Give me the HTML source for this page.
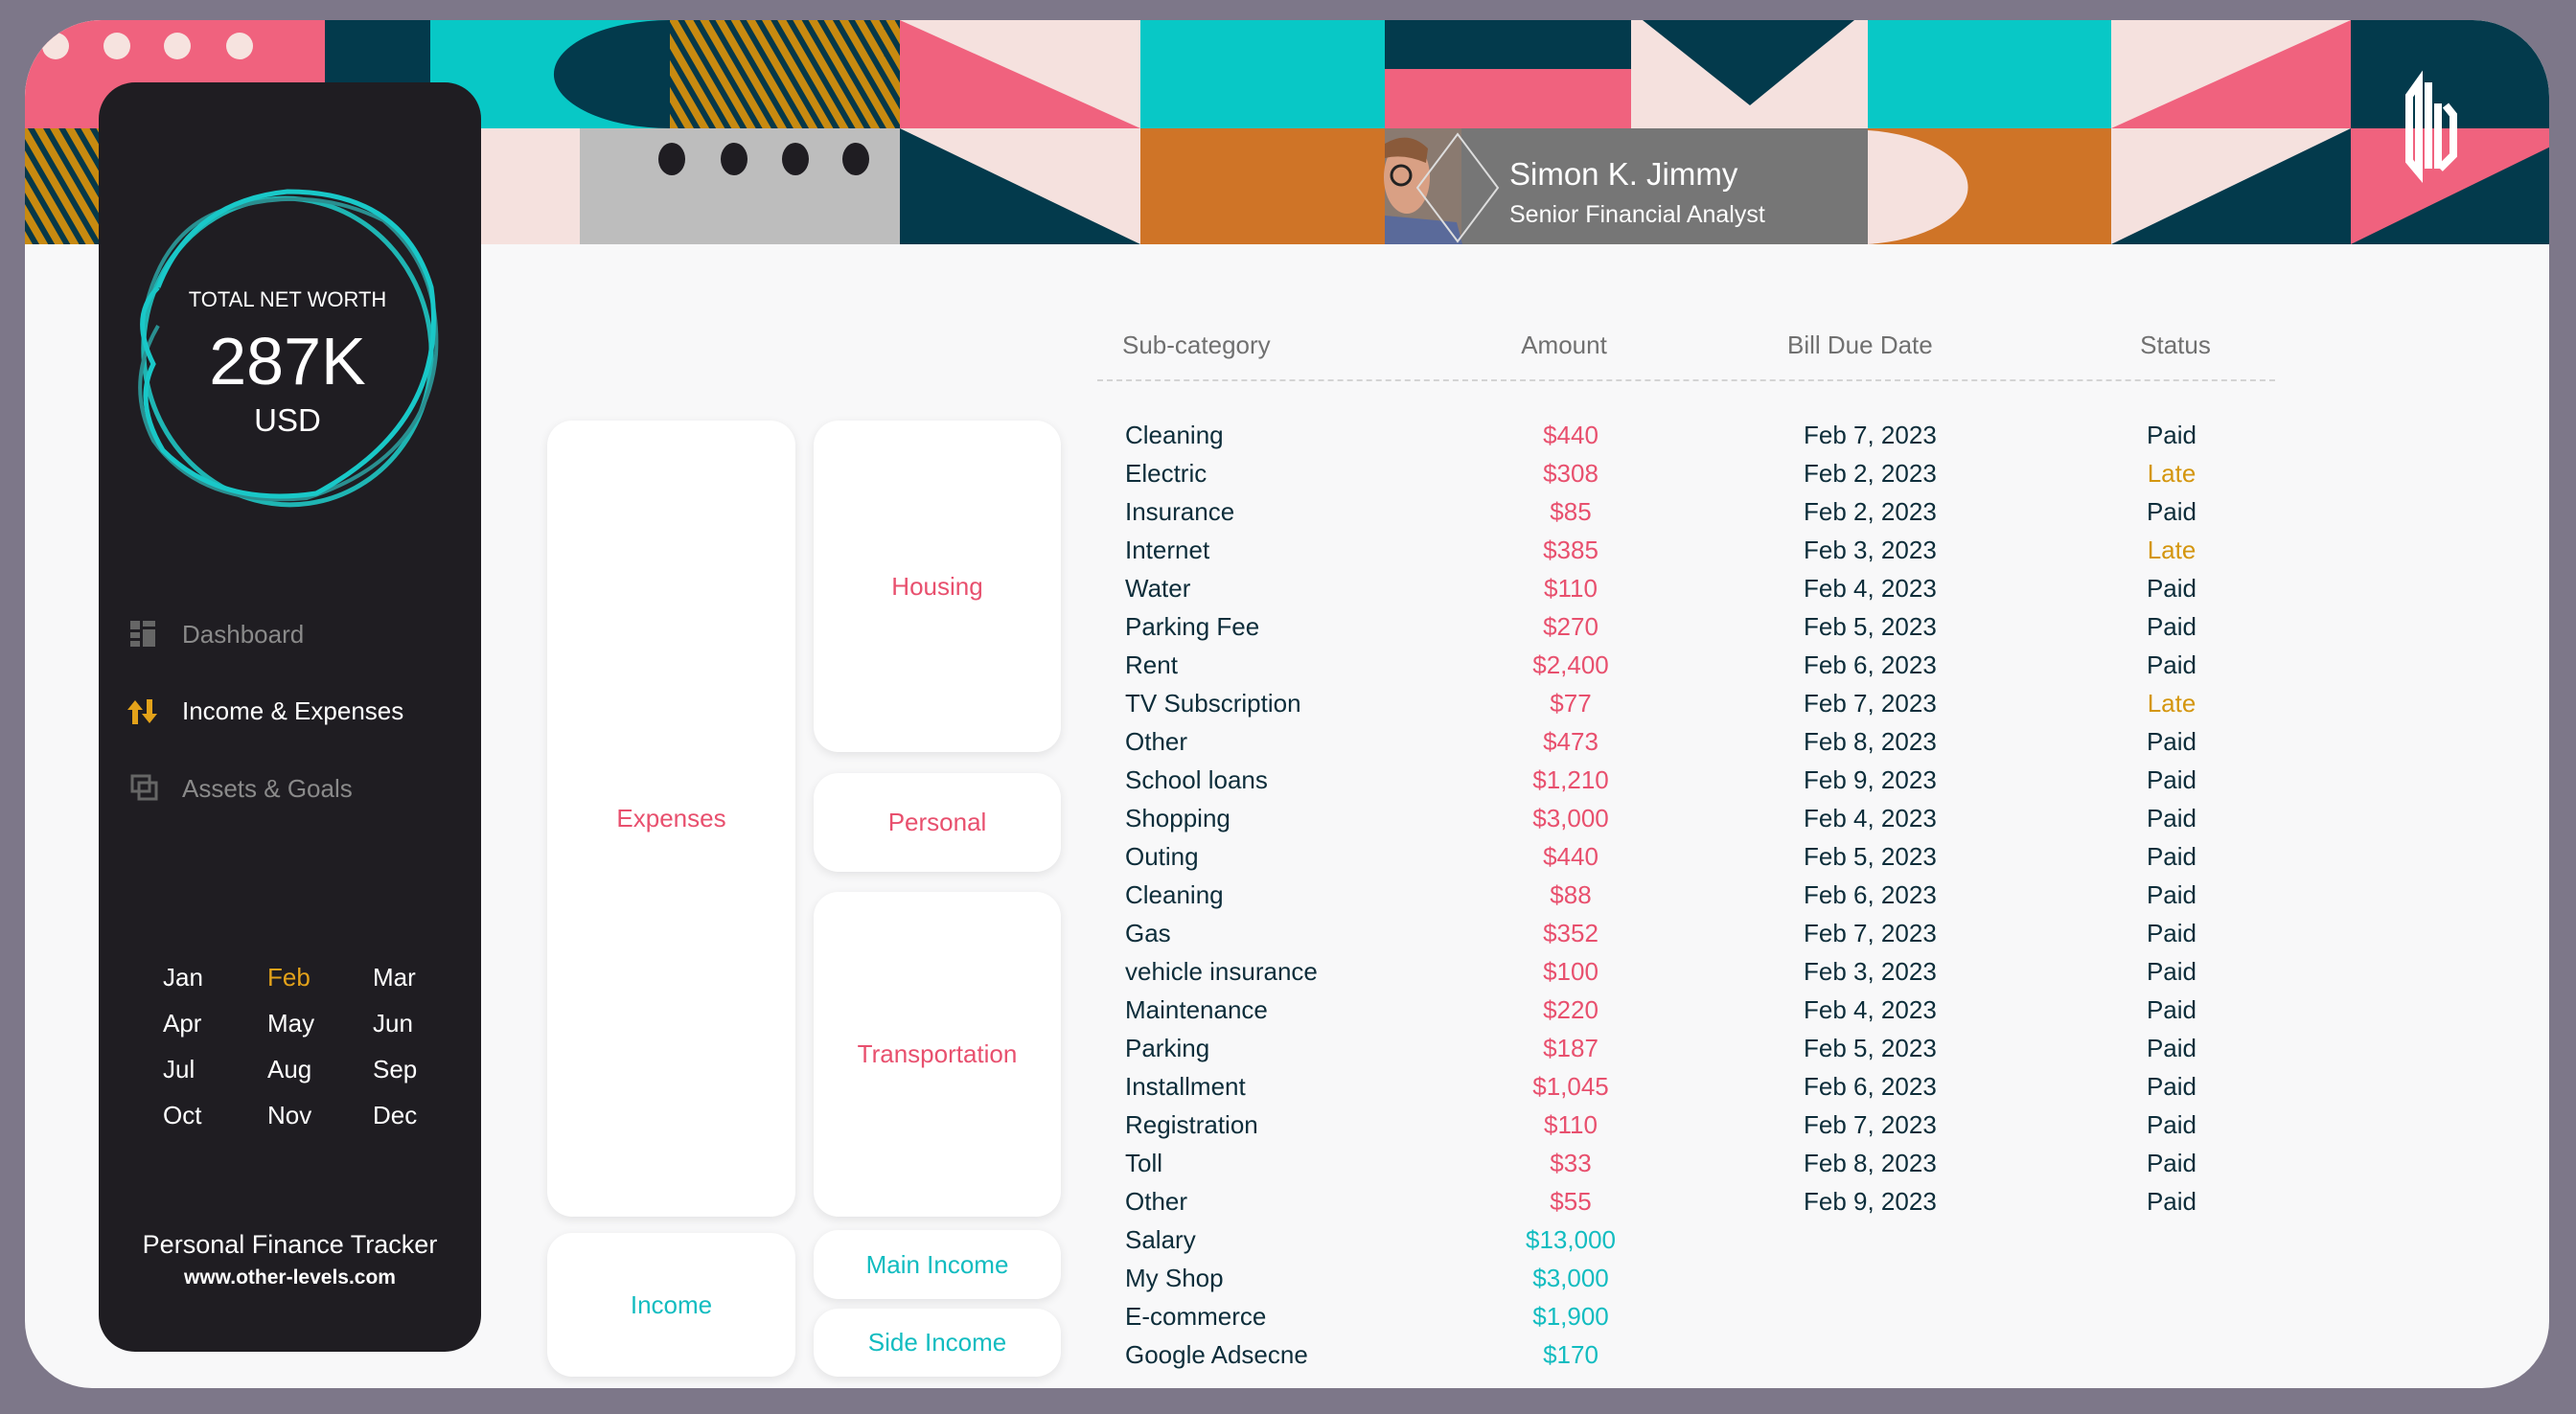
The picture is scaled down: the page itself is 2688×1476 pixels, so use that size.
<!DOCTYPE html>
<html><head><meta charset="utf-8"><style>
*{margin:0;padding:0;box-sizing:border-box}
body{width:2688px;height:1476px;background:#7d7789;position:relative;overflow:hidden;font-family:"Liberation Sans",sans-serif}
#card{position:absolute;left:26px;top:21px;width:2634px;height:1428px;background:#f8f8f9;border-radius:80px 80px 70px 70px;overflow:hidden}
#hdr{position:absolute;left:-26px;top:-21px}
.abs{position:absolute}
#side{position:absolute;left:103px;top:86px;width:399px;height:1325px;background:#1f1d22;border-radius:38px}
.box{position:absolute;background:#fff;border-radius:26px;box-shadow:0 3px 10px rgba(0,0,0,.09);display:flex;align-items:center;justify-content:center;font-size:26px;color:#e8506e}
.cy{color:#12bcc0}
.t{position:absolute;font-size:26px;color:#0d2d3a;white-space:nowrap}
.h{position:absolute;font-size:26px;color:#707070;white-space:nowrap}
.nav{position:absolute;font-size:26px;color:#8a8a8a;white-space:nowrap}
.m{position:absolute;font-size:26px;color:#fff;width:60px}
</style></head><body>
<div id="card">
<svg id="hdr" width="2688" height="260" viewBox="0 0 2688 260">
<defs><pattern id="st" width="14" height="14" patternUnits="userSpaceOnUse" patternTransform="rotate(-30)"><rect width="14" height="14" fill="#c88a10"/><rect width="6" height="14" fill="#063848"/></pattern></defs>
<rect x="0" y="0" width="2688" height="255" fill="#f5e1de"/>
<rect x="0" y="21" width="339" height="113" fill="#f0627e"/>
<circle cx="58" cy="48" r="14" fill="#f6e3df"/><circle cx="122" cy="48" r="14" fill="#f6e3df"/><circle cx="185" cy="48" r="14" fill="#f6e3df"/><circle cx="250" cy="48" r="14" fill="#f6e3df"/>
<rect x="339" y="21" width="110" height="113" fill="#033a4c"/>
<rect x="449" y="21" width="250" height="113" fill="#08c8c6"/>
<path d="M699 21 A120 56 0 0 0 699 134 Z" fill="#033a4c"/>
<rect x="699" y="21" width="240" height="113" fill="url(#st)"/>
<rect x="0" y="134" width="502" height="121" fill="url(#st)"/>
<polygon points="939,21 939,134 1190,134" fill="#f0627e"/>
<rect x="1190" y="21" width="255" height="113" fill="#08c8c6"/>
<rect x="1445" y="21" width="257" height="51" fill="#033a4c"/>
<rect x="1445" y="72" width="257" height="62" fill="#f0627e"/>
<polygon points="1714,21 1935,21 1826,110" fill="#033a4c"/>
<rect x="1949" y="21" width="254" height="113" fill="#08c8c6"/>
<polygon points="2203,134 2453,21 2453,134" fill="#f0627e"/>
<rect x="2453" y="21" width="235" height="113" fill="#033a4c"/>
<rect x="605" y="134" width="334" height="121" fill="#bdbdbd"/>
<ellipse cx="701" cy="166" rx="14" ry="17" fill="#1f1d22"/><ellipse cx="766" cy="166" rx="14" ry="17" fill="#1f1d22"/><ellipse cx="830" cy="166" rx="14" ry="17" fill="#1f1d22"/><ellipse cx="893" cy="166" rx="14" ry="17" fill="#1f1d22"/>
<polygon points="939,134 939,255 1190,255" fill="#033a4c"/>
<rect x="1190" y="134" width="255" height="121" fill="#cf7427"/>
<rect x="1445" y="134" width="504" height="121" fill="#767676"/>
<rect x="1445" y="134" width="80" height="121" fill="#8a7a70"/>
<ellipse cx="1468" cy="185" rx="24" ry="38" fill="#d9a084"/>
<path d="M1445 150 Q1470 135 1490 155 L1488 170 Q1465 160 1445 165Z" fill="#8a5a3a"/>
<circle cx="1462" cy="183" r="10" fill="none" stroke="#222" stroke-width="3"/>
<path d="M1445 225 L1520 232 L1526 255 L1445 255Z" fill="#5a6a9a"/>
<polygon points="1521,140 1563,196 1521,252 1479,196" fill="none" stroke="#ddd" stroke-width="2"/>
<rect x="1949" y="134" width="254" height="121" fill="#cf7427"/>
<path d="M1949 136 A120 60 0 0 1 1949 255 Z" fill="#f5e1de"/>
<polygon points="2203,255 2453,134 2453,255" fill="#033a4c"/>
<rect x="2453" y="134" width="235" height="121" fill="#f0627e"/>
<polygon points="2453,255 2688,140 2688,255" fill="#033a4c"/>
<path d="M2524 86 L2514 100 L2514 168 L2524 180 Z M2534 86 L2534 176 M2544 108 L2544 176 M2546 176 L2560 162 L2560 120 L2552 110" fill="none" stroke="#fff" stroke-width="8" stroke-linejoin="miter"/>
<text x="1575" y="193" font-family="Liberation Sans" font-size="33" fill="#fff">Simon K. Jimmy</text>
<text x="1575" y="232" font-family="Liberation Sans" font-size="25" fill="#fff">Senior Financial Analyst</text>
</svg>
</div>

<div id="side"></div>
<svg class="abs" style="left:120px;top:190px" width="360" height="350" viewBox="120 190 360 350">
<g fill="none">
<ellipse cx="300" cy="367" rx="150" ry="160" stroke="#1fb5b3" stroke-width="5" transform="rotate(-8 300 367)"/>
<path d="M150 330 Q170 230 250 215 Q330 195 400 230 Q460 280 455 370 Q445 480 320 520 Q210 530 160 460 Q130 400 165 340" stroke="#2a8f90" stroke-width="4"/>
<path d="M165 300 Q200 210 300 200 Q420 200 450 300 Q470 440 330 515 Q230 530 170 470 Q140 420 160 380 Q135 330 165 300" stroke="#19c8c8" stroke-width="5"/>
</g>
</svg>
<div class="abs" style="left:120px;top:300px;width:360px;text-align:center;color:#fff;font-size:22px">TOTAL NET WORTH</div>
<div class="abs" style="left:120px;top:337px;width:360px;text-align:center;color:#fff;font-size:70px">287K</div>
<div class="abs" style="left:120px;top:420px;width:360px;text-align:center;color:#fff;font-size:33px">USD</div>

<svg class="abs" style="left:136px;top:648px" width="28" height="28"><rect x="0" y="0" width="10" height="9" fill="#666"/><rect x="0" y="12" width="10" height="6" fill="#666"/><rect x="0" y="21" width="10" height="6" fill="#666"/><rect x="13" y="0" width="13" height="6" fill="#666"/><rect x="13" y="9" width="13" height="18" fill="#666"/></svg>
<div class="nav" style="left:190px;top:647px">Dashboard</div>
<svg class="abs" style="left:132px;top:729px" width="34" height="28"><path d="M9 2 L1 12 H6 V27 H12 V12 H17Z" fill="#e3a21a"/><path d="M24 26 L16 16 H21 V1 H27 V16 H32Z" fill="#e3a21a"/></svg>
<div class="nav" style="left:190px;top:727px;color:#fff">Income &amp; Expenses</div>
<svg class="abs" style="left:136px;top:808px" width="30" height="30"><rect x="2" y="2" width="18" height="16" fill="none" stroke="#666" stroke-width="3"/><rect x="9" y="9" width="18" height="17" fill="none" stroke="#666" stroke-width="3"/></svg>
<div class="nav" style="left:190px;top:808px">Assets &amp; Goals</div>

<div class="m" style="left:170px;top:1005px">Jan</div><div class="m" style="left:279px;top:1005px;color:#e3a21a">Feb</div><div class="m" style="left:389px;top:1005px">Mar</div>
<div class="m" style="left:170px;top:1053px">Apr</div><div class="m" style="left:279px;top:1053px">May</div><div class="m" style="left:389px;top:1053px">Jun</div>
<div class="m" style="left:170px;top:1101px">Jul</div><div class="m" style="left:279px;top:1101px">Aug</div><div class="m" style="left:389px;top:1101px">Sep</div>
<div class="m" style="left:170px;top:1149px">Oct</div><div class="m" style="left:279px;top:1149px">Nov</div><div class="m" style="left:389px;top:1149px">Dec</div>
<div class="abs" style="left:103px;top:1284px;width:399px;text-align:center;color:#fff;font-size:27px">Personal Finance Tracker</div>
<div class="abs" style="left:103px;top:1322px;width:399px;text-align:center;color:#fff;font-size:21px;font-weight:bold">www.other-levels.com</div>

<div class="box" style="left:571px;top:439px;width:259px;height:831px">Expenses</div>
<div class="box" style="left:849px;top:439px;width:258px;height:346px">Housing</div>
<div class="box" style="left:849px;top:807px;width:258px;height:103px">Personal</div>
<div class="box" style="left:849px;top:931px;width:258px;height:339px">Transportation</div>
<div class="box cy" style="left:571px;top:1287px;width:259px;height:150px">Income</div>
<div class="box cy" style="left:849px;top:1284px;width:258px;height:72px">Main Income</div>
<div class="box cy" style="left:849px;top:1366px;width:258px;height:71px">Side Income</div>

<div class="h" style="left:1171px;top:345px">Sub-category</div>
<div class="h" style="left:1532px;top:345px;width:200px;text-align:center">Amount</div>
<div class="h" style="left:1865px;top:345px">Bill Due Date</div>
<div class="h" style="left:2170px;top:345px;width:200px;text-align:center">Status</div>
<div class="abs" style="left:1145px;top:396px;width:1229px;border-top:2px dashed #d4d4d4"></div>

<div class="t" style="left:1174px;top:439px">Cleaning</div><div class="t" style="left:1539px;top:439px;width:200px;text-align:center;color:#e8506e">$440</div><div class="t" style="left:1882px;top:439px">Feb 7, 2023</div><div class="t" style="left:2166px;top:439px;width:200px;text-align:center">Paid</div>
<div class="t" style="left:1174px;top:479px">Electric</div><div class="t" style="left:1539px;top:479px;width:200px;text-align:center;color:#e8506e">$308</div><div class="t" style="left:1882px;top:479px">Feb 2, 2023</div><div class="t" style="left:2166px;top:479px;width:200px;text-align:center;color:#d4960f">Late</div>
<div class="t" style="left:1174px;top:519px">Insurance</div><div class="t" style="left:1539px;top:519px;width:200px;text-align:center;color:#e8506e">$85</div><div class="t" style="left:1882px;top:519px">Feb 2, 2023</div><div class="t" style="left:2166px;top:519px;width:200px;text-align:center">Paid</div>
<div class="t" style="left:1174px;top:559px">Internet</div><div class="t" style="left:1539px;top:559px;width:200px;text-align:center;color:#e8506e">$385</div><div class="t" style="left:1882px;top:559px">Feb 3, 2023</div><div class="t" style="left:2166px;top:559px;width:200px;text-align:center;color:#d4960f">Late</div>
<div class="t" style="left:1174px;top:599px">Water</div><div class="t" style="left:1539px;top:599px;width:200px;text-align:center;color:#e8506e">$110</div><div class="t" style="left:1882px;top:599px">Feb 4, 2023</div><div class="t" style="left:2166px;top:599px;width:200px;text-align:center">Paid</div>
<div class="t" style="left:1174px;top:639px">Parking Fee</div><div class="t" style="left:1539px;top:639px;width:200px;text-align:center;color:#e8506e">$270</div><div class="t" style="left:1882px;top:639px">Feb 5, 2023</div><div class="t" style="left:2166px;top:639px;width:200px;text-align:center">Paid</div>
<div class="t" style="left:1174px;top:679px">Rent</div><div class="t" style="left:1539px;top:679px;width:200px;text-align:center;color:#e8506e">$2,400</div><div class="t" style="left:1882px;top:679px">Feb 6, 2023</div><div class="t" style="left:2166px;top:679px;width:200px;text-align:center">Paid</div>
<div class="t" style="left:1174px;top:719px">TV Subscription</div><div class="t" style="left:1539px;top:719px;width:200px;text-align:center;color:#e8506e">$77</div><div class="t" style="left:1882px;top:719px">Feb 7, 2023</div><div class="t" style="left:2166px;top:719px;width:200px;text-align:center;color:#d4960f">Late</div>
<div class="t" style="left:1174px;top:759px">Other</div><div class="t" style="left:1539px;top:759px;width:200px;text-align:center;color:#e8506e">$473</div><div class="t" style="left:1882px;top:759px">Feb 8, 2023</div><div class="t" style="left:2166px;top:759px;width:200px;text-align:center">Paid</div>
<div class="t" style="left:1174px;top:799px">School loans</div><div class="t" style="left:1539px;top:799px;width:200px;text-align:center;color:#e8506e">$1,210</div><div class="t" style="left:1882px;top:799px">Feb 9, 2023</div><div class="t" style="left:2166px;top:799px;width:200px;text-align:center">Paid</div>
<div class="t" style="left:1174px;top:839px">Shopping</div><div class="t" style="left:1539px;top:839px;width:200px;text-align:center;color:#e8506e">$3,000</div><div class="t" style="left:1882px;top:839px">Feb 4, 2023</div><div class="t" style="left:2166px;top:839px;width:200px;text-align:center">Paid</div>
<div class="t" style="left:1174px;top:879px">Outing</div><div class="t" style="left:1539px;top:879px;width:200px;text-align:center;color:#e8506e">$440</div><div class="t" style="left:1882px;top:879px">Feb 5, 2023</div><div class="t" style="left:2166px;top:879px;width:200px;text-align:center">Paid</div>
<div class="t" style="left:1174px;top:919px">Cleaning</div><div class="t" style="left:1539px;top:919px;width:200px;text-align:center;color:#e8506e">$88</div><div class="t" style="left:1882px;top:919px">Feb 6, 2023</div><div class="t" style="left:2166px;top:919px;width:200px;text-align:center">Paid</div>
<div class="t" style="left:1174px;top:959px">Gas</div><div class="t" style="left:1539px;top:959px;width:200px;text-align:center;color:#e8506e">$352</div><div class="t" style="left:1882px;top:959px">Feb 7, 2023</div><div class="t" style="left:2166px;top:959px;width:200px;text-align:center">Paid</div>
<div class="t" style="left:1174px;top:999px">vehicle insurance</div><div class="t" style="left:1539px;top:999px;width:200px;text-align:center;color:#e8506e">$100</div><div class="t" style="left:1882px;top:999px">Feb 3, 2023</div><div class="t" style="left:2166px;top:999px;width:200px;text-align:center">Paid</div>
<div class="t" style="left:1174px;top:1039px">Maintenance</div><div class="t" style="left:1539px;top:1039px;width:200px;text-align:center;color:#e8506e">$220</div><div class="t" style="left:1882px;top:1039px">Feb 4, 2023</div><div class="t" style="left:2166px;top:1039px;width:200px;text-align:center">Paid</div>
<div class="t" style="left:1174px;top:1079px">Parking</div><div class="t" style="left:1539px;top:1079px;width:200px;text-align:center;color:#e8506e">$187</div><div class="t" style="left:1882px;top:1079px">Feb 5, 2023</div><div class="t" style="left:2166px;top:1079px;width:200px;text-align:center">Paid</div>
<div class="t" style="left:1174px;top:1119px">Installment</div><div class="t" style="left:1539px;top:1119px;width:200px;text-align:center;color:#e8506e">$1,045</div><div class="t" style="left:1882px;top:1119px">Feb 6, 2023</div><div class="t" style="left:2166px;top:1119px;width:200px;text-align:center">Paid</div>
<div class="t" style="left:1174px;top:1159px">Registration</div><div class="t" style="left:1539px;top:1159px;width:200px;text-align:center;color:#e8506e">$110</div><div class="t" style="left:1882px;top:1159px">Feb 7, 2023</div><div class="t" style="left:2166px;top:1159px;width:200px;text-align:center">Paid</div>
<div class="t" style="left:1174px;top:1199px">Toll</div><div class="t" style="left:1539px;top:1199px;width:200px;text-align:center;color:#e8506e">$33</div><div class="t" style="left:1882px;top:1199px">Feb 8, 2023</div><div class="t" style="left:2166px;top:1199px;width:200px;text-align:center">Paid</div>
<div class="t" style="left:1174px;top:1239px">Other</div><div class="t" style="left:1539px;top:1239px;width:200px;text-align:center;color:#e8506e">$55</div><div class="t" style="left:1882px;top:1239px">Feb 9, 2023</div><div class="t" style="left:2166px;top:1239px;width:200px;text-align:center">Paid</div>
<div class="t" style="left:1174px;top:1279px">Salary</div><div class="t" style="left:1539px;top:1279px;width:200px;text-align:center;color:#12bcc0">$13,000</div>
<div class="t" style="left:1174px;top:1319px">My Shop</div><div class="t" style="left:1539px;top:1319px;width:200px;text-align:center;color:#12bcc0">$3,000</div>
<div class="t" style="left:1174px;top:1359px">E-commerce</div><div class="t" style="left:1539px;top:1359px;width:200px;text-align:center;color:#12bcc0">$1,900</div>
<div class="t" style="left:1174px;top:1399px">Google Adsecne</div><div class="t" style="left:1539px;top:1399px;width:200px;text-align:center;color:#12bcc0">$170</div>
</body></html>
